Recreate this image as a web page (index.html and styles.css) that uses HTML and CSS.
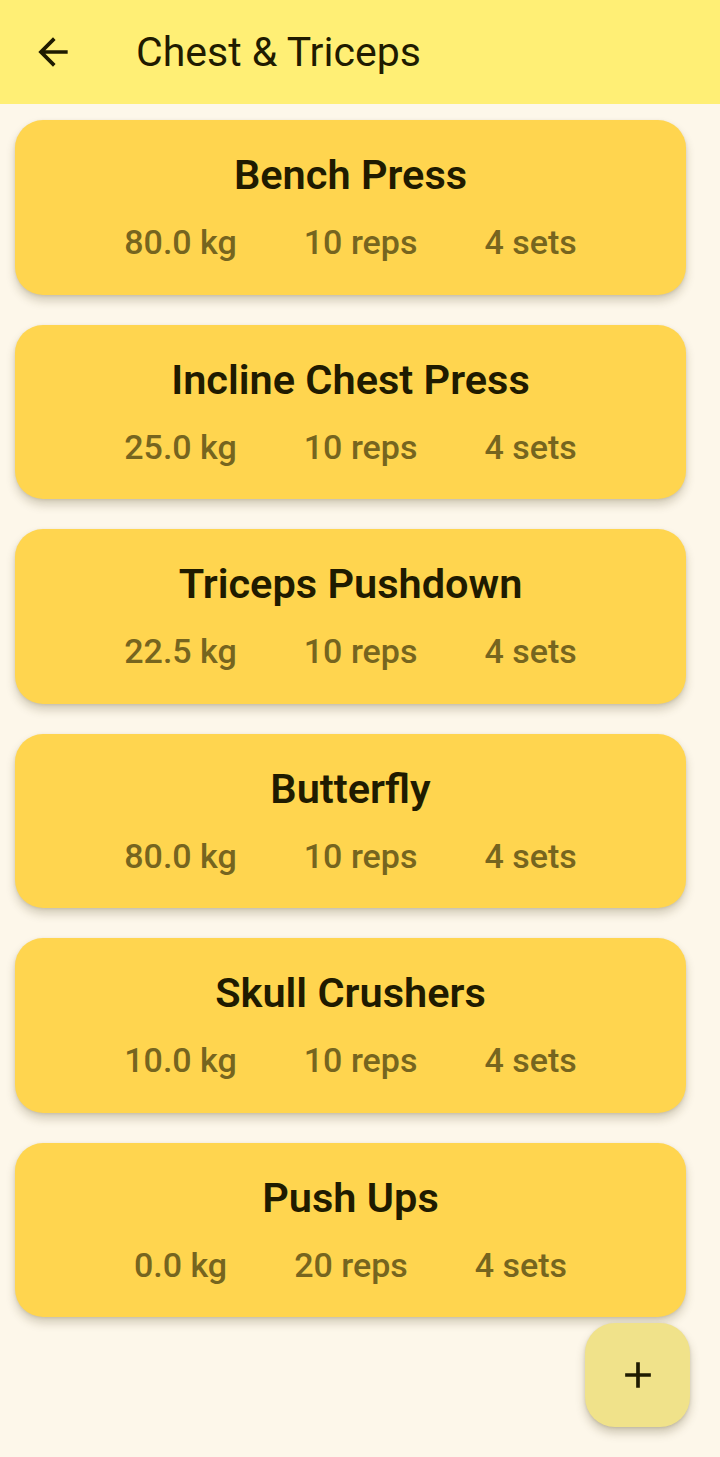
FILE: index.html
```html
<!DOCTYPE html>
<html>
<head>
<meta charset="utf-8">
<link rel="stylesheet" href="styles.css">
</head>
<body>
<header class="appbar">
  <button class="back" aria-label="Back">
    <svg viewBox="0 0 24 24" width="44" height="44"><path d="M20 11H7.83l5.59-5.59L12 4l-8 8 8 8 1.41-1.41L7.83 13H20v-2z" fill="currentColor"/></svg>
  </button>
  <h1 class="title">Chest &amp; Triceps</h1>
</header>
<main class="list">
  <div class="card">
    <div class="name">Bench Press</div>
    <div class="stats"><span>80.0 kg</span><span>10 reps</span><span>4 sets</span></div>
  </div>
  <div class="card">
    <div class="name">Incline Chest Press</div>
    <div class="stats"><span>25.0 kg</span><span>10 reps</span><span>4 sets</span></div>
  </div>
  <div class="card">
    <div class="name">Triceps Pushdown</div>
    <div class="stats"><span>22.5 kg</span><span>10 reps</span><span>4 sets</span></div>
  </div>
  <div class="card">
    <div class="name">Butterfly</div>
    <div class="stats"><span>80.0 kg</span><span>10 reps</span><span>4 sets</span></div>
  </div>
  <div class="card">
    <div class="name">Skull Crushers</div>
    <div class="stats"><span>10.0 kg</span><span>10 reps</span><span>4 sets</span></div>
  </div>
  <div class="card">
    <div class="name">Push Ups</div>
    <div class="stats"><span>0.0 kg</span><span>20 reps</span><span>4 sets</span></div>
  </div>
</main>
<button class="fab" aria-label="Add">
  <svg viewBox="0 0 24 24" width="44" height="44"><path d="M19 13h-6v6h-2v-6H5v-2h6V5h2v6h6v2z" fill="currentColor"/></svg>
</button>
</body>
</html>
```
FILE: styles.css
```css
* { box-sizing: border-box; }
html, body { margin: 0; padding: 0; }
body {
  width: 720px;
  height: 1457px;
  background: #FDF7EA;
  font-family: Roboto, "Noto Sans", sans-serif;
  color: #1F1B00;
  position: relative;
  overflow: hidden;
}
.appbar {
  height: 104px;
  background: #FFEF75;
  display: flex;
  align-items: center;
  padding-left: 31px;
}
.back {
  width: 44px;
  height: 44px;
  padding: 0;
  border: 0;
  background: none;
  color: #1F1B00;
  display: flex;
}
.title {
  margin: 0 0 0 61px;
  font-size: 41px;
  font-weight: 400;
  line-height: 1;
}
.list {
  padding: 16px 34px 0 15px;
  display: flex;
  flex-direction: column;
  gap: 30px;
}
.card {
  background: #FFD54F;
  border-radius: 28px;
  height: 174.5px;
  box-shadow: 0 6px 10px rgba(70, 60, 20, 0.22), 0 1px 3px rgba(70,60,20,0.12);
  display: flex;
  flex-direction: column;
  align-items: center;
  padding-top: 31px;
}
.name {
  font-size: 41.5px;
  font-weight: 600;
  line-height: 48px;
}
.stats {
  display: flex;
  gap: 67px;
  margin-top: 23px;
  font-size: 34px;
  line-height: 40px;
  color: #76651F;
  font-weight: 500;
}
.fab {
  position: absolute;
  left: 585px;
  top: 1323px;
  width: 105px;
  height: 104px;
  border: 0;
  padding: 0;
  border-radius: 30px;
  background: #F0E28A;
  color: #1F1B00;
  display: flex;
  align-items: center;
  justify-content: center;
  box-shadow: 0 6px 10px rgba(70, 60, 20, 0.25), 0 1px 3px rgba(70,60,20,0.15);
}
```
